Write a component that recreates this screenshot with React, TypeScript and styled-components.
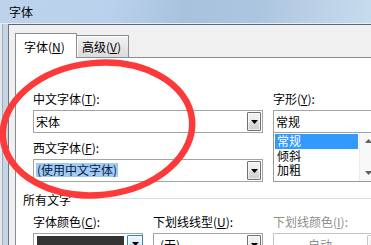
import React from "react";
import styled, { createGlobalStyle } from "styled-components";

const GlobalStyle = createGlobalStyle`
  html, body { margin: 0; padding: 0; }
  body {
    font-family: "Noto Sans CJK SC", "Microsoft YaHei", sans-serif;
    font-size: 12px;
    color: #000;
  }
  u { text-decoration-thickness: 1px; text-underline-offset: 1px; }
`;

const Window = styled.div`
  position: relative;
  width: 371px;
  height: 245px;
  overflow: hidden;
  display: flex;
  flex-direction: column;
  background: #c5d5e5;
`;

const TitleBar = styled.div`
  flex: none;
  height: 23px;
  line-height: 23px;
  padding-left: 9px;
  font-size: 12px;
  color: #000;
  border-bottom: 1px solid #e7eef6;
  background: linear-gradient(
    100deg,
    #bcd3eb 0%,
    #b9d1ea 30%,
    #a9c2dc 50%,
    #adc6df 70%,
    #bed3e8 88%,
    #c7dbee 100%
  );
`;

const Body = styled.div`
  flex: 1;
  display: flex;
  min-height: 0;
`;

const Frame = styled.div`
  flex: none;
  width: 8px;
  background: linear-gradient(
    to right,
    #e2e9f1 0 2px,
    #9fadbb 2px 3px,
    #c6d5e4 3px 100%
  );
`;

const Client = styled.div`
  flex: 1;
  display: flex;
  flex-direction: column;
  background: #f0f0f0;
  border-top: 1px solid #5c6877;
  border-left: 1px solid #6a7480;
  padding: 8px 0 0 6px;
  min-width: 0;
`;

const TabStrip = styled.div`
  display: flex;
  align-items: flex-end;
  height: 24px;
  flex: none;
`;

const Tab = styled.div<{ $active?: boolean }>`
  position: relative;
  z-index: 2;
  box-sizing: border-box;
  display: flex;
  align-items: center;
  border: 1px solid #898c95;
  border-bottom: none;
  white-space: nowrap;
  ${({ $active }) =>
    $active
      ? `
    width: 62px;
    height: 25px;
    margin-bottom: -1px;
    padding-left: 8px;
    background: #fff;
  `
      : `
    width: 53px;
    height: 22px;
    padding-left: 5px;
    margin-left: -1px;
    background: linear-gradient(#f3f3f3, #e6e6e6 50%, #dcdcdc);
    box-shadow: inset 1px 1px 0 #fff;
  `}
`;

const Panel = styled.div`
  flex: 1;
  background: #fff;
  border-top: 1px solid #898c95;
  border-left: 1px solid #898c95;
  padding: 33px 0 0 17px;
  width: 420px;
`;

const TopSection = styled.div`
  display: flex;
  gap: 10px;
`;

const Column = styled.div<{ $width: number }>`
  display: flex;
  flex-direction: column;
  width: ${({ $width }) => $width}px;
  flex: none;
`;

const FieldLabel = styled.div<{ $disabled?: boolean; $gapTop?: number }>`
  height: 16px;
  line-height: 16px;
  margin-bottom: 3px;
  margin-top: ${({ $gapTop }) => $gapTop ?? 0}px;
  white-space: nowrap;
  color: ${({ $disabled }) => ($disabled ? "#8d8d8d" : "#000")};
`;

const Combo = styled.div<{ $disabled?: boolean }>`
  box-sizing: border-box;
  height: 23px;
  display: flex;
  align-items: stretch;
  border: 1px solid ${({ $disabled }) => ($disabled ? "#c4c4c4" : "#a3a3a3")};
  background: #fff;
`;

const Value = styled.div<{ $center?: boolean; $disabled?: boolean; $indent?: number }>`
  flex: 1;
  display: flex;
  align-items: center;
  padding-left: ${({ $center, $indent }) => ($center ? 0 : $indent ?? 2)}px;
  justify-content: ${({ $center }) => ($center ? "center" : "flex-start")};
  color: ${({ $disabled }) => ($disabled ? "#8d8d8d" : "#000")};
  white-space: nowrap;
  min-width: 0;
`;

const Selected = styled.span`
  background: #9fcbf6;
  color: #0b1b3a;
  line-height: 14px;
  padding: 0 1px;
  margin-top: -2px;
`;

const DropBtn = styled.div<{ $variant?: "focus" | "disabled" }>`
  box-sizing: border-box;
  flex: none;
  width: 14px;
  margin: 1px;
  display: flex;
  align-items: center;
  justify-content: center;
  border: 1px solid
    ${({ $variant }) =>
      $variant === "focus"
        ? "#3c7fb1"
        : $variant === "disabled"
        ? "#c9c9c9"
        : "#707070"};
  border-radius: 1px;
  background: ${({ $variant }) =>
    $variant === "focus"
      ? "linear-gradient(#eaf6fd, #d9f0fc 50%, #bee6fd 50%, #a7d9f5)"
      : $variant === "disabled"
      ? "#f4f4f4"
      : "linear-gradient(#f2f2f2, #ebebeb 50%, #dddddd 50%, #cfcfcf)"};
  box-shadow: inset 0 0 0 1px rgba(255, 255, 255, 0.6);
`;

const Arrow = ({ color = "#000" }: { color?: string }) => (
  <svg width="7" height="4" viewBox="0 0 7 4">
    <path d="M0 0H7L3.5 4Z" fill={color} />
  </svg>
);

const ListBox = styled.div`
  box-sizing: border-box;
  height: 49px;
  display: flex;
  border: 1px solid #9a9a9a;
  border-top: none;
  background: #fff;
`;

const Items = styled.div`
  flex: 1;
  padding: 1px;
  min-width: 0;
`;

const Item = styled.div<{ $selected?: boolean }>`
  height: 14.5px;
  line-height: 14.5px;
  padding-left: 2px;
  white-space: nowrap;
  background: ${({ $selected }) => ($selected ? "#3399ff" : "transparent")};
  color: ${({ $selected }) => ($selected ? "#fff" : "#000")};
`;

const ScrollBar = styled.div`
  flex: none;
  width: 17px;
  display: flex;
  flex-direction: column;
  justify-content: space-between;
  align-items: center;
  padding: 6px 0 6px;
  background: #f8f8f8;
  border-left: 1px solid #ececec;
`;

const ScrollArrow = ({ up }: { up?: boolean }) => (
  <svg width="7" height="4" viewBox="0 0 7 4">
    <path d={up ? "M0 4H7L3.5 0Z" : "M0 0H7L3.5 4Z"} fill="#606060" />
  </svg>
);

const GroupHeader = styled.div`
  display: flex;
  height: 16px;
  line-height: 16px;
  margin-top: 10px;
  margin-left: -10px;
  white-space: nowrap;
`;

const GroupLine = styled.div`
  flex: 1;
  height: 1px;
  margin: 6px 0 0 4px;
  background: #d5dfe5;
`;

const BottomRow = styled.div`
  display: grid;
  grid-template-columns: 110px 110px 110px;
  column-gap: 10px;
  margin-top: 6px;
`;

const Cell = styled.div`
  display: flex;
  flex-direction: column;
`;

const ColorBox = styled(Combo)`
  padding: 2px 0 2px 3px;
  gap: 3px;
`;

const Swatch = styled.div`
  flex: 1;
  background: #333;
`;

const ColorBtn = styled(DropBtn)`
  width: 16px;
  margin: -1px -1px 0 0;
`;

const Ellipse = styled.svg`
  position: absolute;
  left: 0;
  top: 0;
  pointer-events: none;
`;

export default function App() {
  return (
    <>
      <GlobalStyle />
      <Window>
        <TitleBar>字体</TitleBar>
        <Body>
          <Frame />
          <Client>
            <TabStrip>
              <Tab $active>
                字体(<u>N</u>)
              </Tab>
              <Tab>
                高级(<u>V</u>)
              </Tab>
            </TabStrip>
            <Panel>
              <TopSection>
                <Column $width={230}>
                  <FieldLabel>
                    中文字体(<u>T</u>):
                  </FieldLabel>
                  <Combo>
                    <Value>宋体</Value>
                    <DropBtn>
                      <Arrow />
                    </DropBtn>
                  </Combo>
                  <FieldLabel $gapTop={7}>
                    西文字体(<u>F</u>):
                  </FieldLabel>
                  <Combo>
                    <Value>
                      <Selected>(使用中文字体)</Selected>
                    </Value>
                    <DropBtn>
                      <Arrow />
                    </DropBtn>
                  </Combo>
                </Column>
                <Column $width={105}>
                  <FieldLabel>
                    字形(<u>Y</u>):
                  </FieldLabel>
                  <Combo>
                    <Value>常规</Value>
                  </Combo>
                  <ListBox>
                    <Items>
                      <Item $selected>常规</Item>
                      <Item>倾斜</Item>
                      <Item>加粗</Item>
                    </Items>
                    <ScrollBar>
                      <ScrollArrow up />
                      <ScrollArrow />
                    </ScrollBar>
                  </ListBox>
                </Column>
              </TopSection>
              <GroupHeader>
                所有文字
                <GroupLine />
              </GroupHeader>
              <BottomRow>
                <Cell>
                  <FieldLabel>
                    字体颜色(<u>C</u>):
                  </FieldLabel>
                  <ColorBox>
                    <Swatch />
                    <ColorBtn $variant="focus">
                      <Arrow />
                    </ColorBtn>
                  </ColorBox>
                </Cell>
                <Cell>
                  <FieldLabel>
                    下划线线型(<u>U</u>):
                  </FieldLabel>
                  <Combo>
                    <Value $indent={6}>(无)</Value>
                    <DropBtn>
                      <Arrow />
                    </DropBtn>
                  </Combo>
                </Cell>
                <Cell>
                  <FieldLabel $disabled>
                    下划线颜色(<u>I</u>):
                  </FieldLabel>
                  <Combo $disabled>
                    <Value $center $disabled>
                      自动
                    </Value>
                    <DropBtn $variant="disabled">
                      <Arrow color="#a0a0a0" />
                    </DropBtn>
                  </Combo>
                </Cell>
              </BottomRow>
            </Panel>
          </Client>
        </Body>
        <Ellipse width="371" height="245" viewBox="0 0 371 245">
          <ellipse
            cx="97.5"
            cy="129"
            rx="95"
            ry="66"
            fill="none"
            stroke="#fd3a3a"
            strokeWidth="6.5"
            transform="rotate(-6 97.5 129)"
          />
        </Ellipse>
      </Window>
    </>
  );
}
